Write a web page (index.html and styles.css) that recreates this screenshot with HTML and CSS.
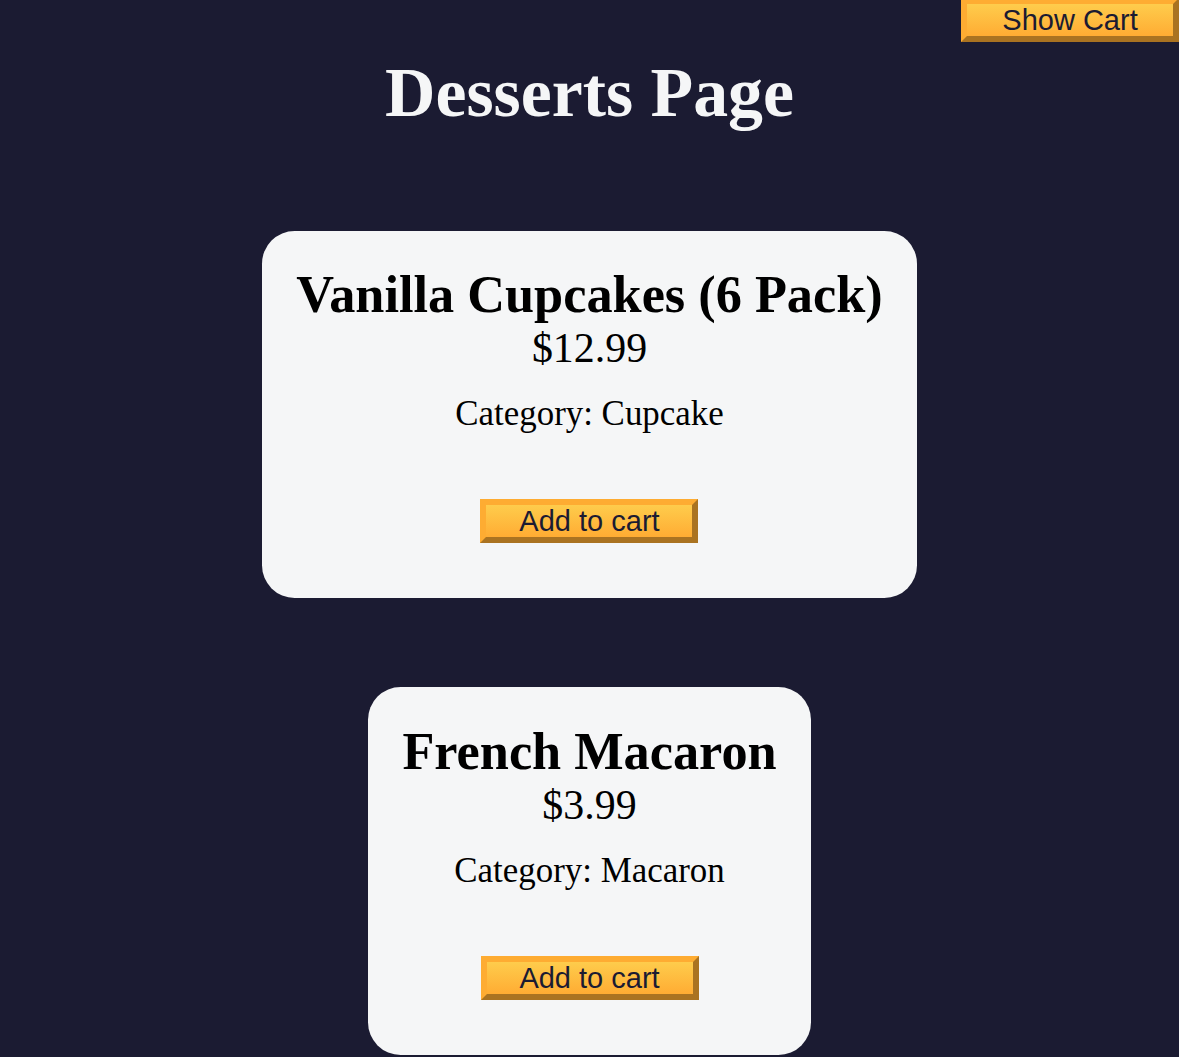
FILE: index.html
```html
<!DOCTYPE html>
<html lang="en">
<head>
<meta charset="UTF-8">
<title>Desserts Page</title>
<link rel="stylesheet" href="styles.css">
</head>
<body>
  <button class="btn cart-btn" type="button">Show Cart</button>
  <h1 class="title">Desserts Page</h1>
  <main class="card-container">
    <div class="dessert-card">
      <h2 class="dessert-name">Vanilla Cupcakes (6 Pack)</h2>
      <p class="dessert-price">$12.99</p>
      <p class="product-category">Category: Cupcake</p>
      <button class="btn add-to-cart-btn" type="button">Add to cart</button>
    </div>
    <div class="dessert-card">
      <h2 class="dessert-name">French Macaron</h2>
      <p class="dessert-price">$3.99</p>
      <p class="product-category">Category: Macaron</p>
      <button class="btn add-to-cart-btn" type="button">Add to cart</button>
    </div>
  </main>
</body>
</html>
```

FILE: styles.css
```css
*,
*::before,
*::after {
  margin: 0;
  padding: 0;
  box-sizing: border-box;
}

body {
  background-color: #1b1b32;
  font-family: "Liberation Serif", "Times New Roman", serif;
  color: #000;
}

.title {
  color: #f5f6f7;
  text-align: center;
  margin: 52.5px 0 53.5px;
  font-size: 69.8px;
  font-weight: bold;
}

.card-container {
  display: flex;
  flex-direction: column;
  align-items: center;
}

.dessert-card {
  background-color: #f5f6f7;
  padding: 33.5px 34.2px;
  text-align: center;
  border-radius: 32.7px;
  margin: 44.5px 21.8px;
}

.dessert-name {
  font-size: 52.3px;
  font-weight: bold;
}

.dessert-price {
  font-size: 41.9px;
}

.product-category {
  font-size: 34.9px;
  margin: 21.8px 0;
}

.btn {
  display: block;
  cursor: pointer;
  width: 218px;
  font-family: "Liberation Sans", Arial, sans-serif;
  font-size: 29px;
  line-height: 32px;
  color: #1b1b32;
  background-color: #feac32;
  background-image: linear-gradient(#fecc4c, #ffac33);
  border: 6px outset #feac32;
}

.add-to-cart-btn {
  margin: 65.4px auto 21.8px;
}

.cart-btn {
  position: absolute;
  top: -2px;
  right: 0;
}
```
